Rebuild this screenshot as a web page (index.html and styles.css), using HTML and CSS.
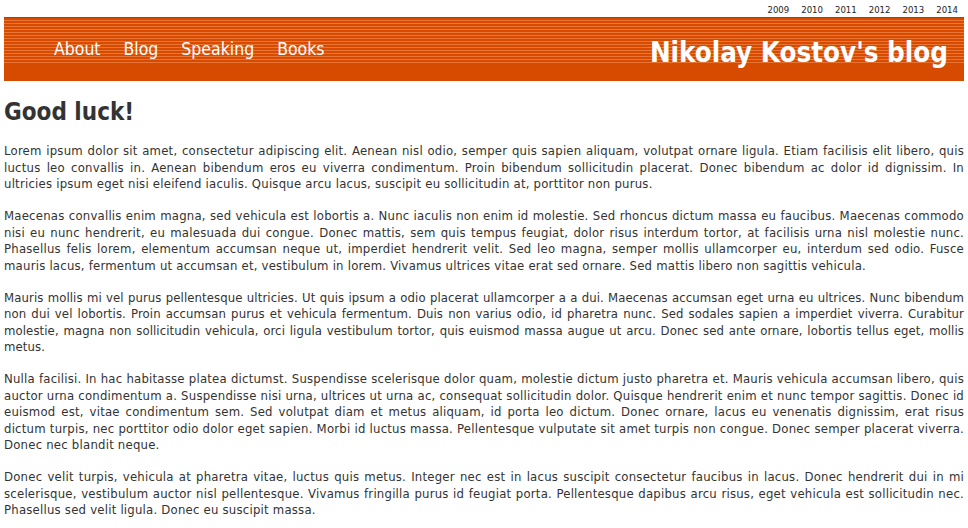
FILE: index.html
```html
<!DOCTYPE html>
<html>
<head>
<meta charset="utf-8">
<title>Nikolay Kostov's blog</title>
<link rel="stylesheet" href="styles.css">
</head>
<body>
<div class="page">
  <div class="years">
    <a href="#">2009</a><a href="#">2010</a><a href="#">2011</a><a href="#">2012</a><a href="#">2013</a><a href="#">2014</a>
  </div>
  <header class="header">
    <nav class="nav">
      <a href="#">About</a><a href="#">Blog</a><a href="#">Speaking</a><a href="#">Books</a>
    </nav>
    <div class="title">Nikolay Kostov's blog</div>
  </header>
  <main class="content">
    <h1>Good luck!</h1>
    <p>Lorem ipsum dolor sit amet, consectetur adipiscing elit. Aenean nisl odio, semper quis sapien aliquam, volutpat ornare ligula. Etiam facilisis elit libero, quis luctus leo convallis in. Aenean bibendum eros eu viverra condimentum. Proin bibendum sollicitudin placerat. Donec bibendum ac dolor id dignissim. In ultricies ipsum eget nisi eleifend iaculis. Quisque arcu lacus, suscipit eu sollicitudin at, porttitor non purus.</p>
    <p>Maecenas convallis enim magna, sed vehicula est lobortis a. Nunc iaculis non enim id molestie. Sed rhoncus dictum massa eu faucibus. Maecenas commodo nisi eu nunc hendrerit, eu malesuada dui congue. Donec mattis, sem quis tempus feugiat, dolor risus interdum tortor, at facilisis urna nisl molestie nunc. Phasellus felis lorem, elementum accumsan neque ut, imperdiet hendrerit velit. Sed leo magna, semper mollis ullamcorper eu, interdum sed odio. Fusce mauris lacus, fermentum ut accumsan et, vestibulum in lorem. Vivamus ultrices vitae erat sed ornare. Sed mattis libero non sagittis vehicula.</p>
    <p class="tight">Mauris mollis mi vel purus pellentesque ultricies. Ut quis ipsum a odio placerat ullamcorper a a dui. Maecenas accumsan eget urna eu ultrices. Nunc bibendum non dui vel lobortis. Proin accumsan purus et vehicula fermentum. Duis non varius odio, id pharetra nunc. Sed sodales sapien a imperdiet viverra. Curabitur molestie, magna non sollicitudin vehicula, orci ligula vestibulum tortor, quis euismod massa augue ut arcu. Donec sed ante ornare, lobortis tellus eget, mollis metus.</p>
    <p>Nulla facilisi. In hac habitasse platea dictumst. Suspendisse scelerisque dolor quam, molestie dictum justo pharetra et. Mauris vehicula accumsan libero, quis auctor urna condimentum a. Suspendisse nisi urna, ultrices ut urna ac, consequat sollicitudin dolor. Quisque hendrerit enim et nunc tempor sagittis. Donec id euismod est, vitae condimentum sem. Sed volutpat diam et metus aliquam, id porta leo dictum. Donec ornare, lacus eu venenatis dignissim, erat risus dictum turpis, nec porttitor odio dolor eget sapien. Morbi id luctus massa. Pellentesque vulputate sit amet turpis non congue. Donec semper placerat viverra. Donec nec blandit neque.</p>
    <p>Donec velit turpis, vehicula at pharetra vitae, luctus quis metus. Integer nec est in lacus suscipit consectetur faucibus in lacus. Donec hendrerit dui in mi scelerisque, vestibulum auctor nisl pellentesque. Vivamus fringilla purus id feugiat porta. Pellentesque dapibus arcu risus, eget vehicula est sollicitudin nec. Phasellus sed velit ligula. Donec eu suscipit massa.</p>
  </main>
</div>
</body>
</html>
```
FILE: styles.css
```css
html, body {
  margin: 0;
  padding: 0;
  background: #fff;
}
body {
  font-family: "DejaVu Sans Condensed", "DejaVu Sans", sans-serif;
  color: #333;
}
.page {
  width: 960px;
  margin: 0 auto;
}
.years {
  display: flex;
  justify-content: flex-end;
  gap: 12px;
  padding: 4px 6px 0 0;
  height: 13px;
  font-size: 9.5px;
  line-height: 12px;
}
.years a {
  color: #222;
  text-decoration: none;
}
.header {
  display: flex;
  justify-content: space-between;
  align-items: flex-start;
  height: 63px;
  border-top: 1px solid #b53d00;
  background-color: #d64b00;
  background-image: repeating-linear-gradient(to bottom, transparent 0, transparent 2px, rgba(255, 170, 120, 0.45) 2px, rgba(255, 170, 120, 0.45) 3px);
  background-size: 100% 45px;
  background-repeat: no-repeat;
}
.nav {
  display: flex;
  gap: 23px;
  padding: 20px 0 0 50px;
  font-size: 17.5px;
  line-height: 22px;
}
.nav a {
  color: #fff;
  text-decoration: none;
}
.title {
  color: #fff;
  font-weight: bold;
  font-size: 27.5px;
  line-height: 34px;
  padding: 17px 16px 0 0;
}
h1 {
  margin: 17px 0 17px;
  font-size: 24px;
  line-height: 28px;
  font-weight: bold;
  color: #333;
}
p {
  margin: 0 0 15.5px;
  font-size: 13px;
  line-height: 16.5px;
  letter-spacing: 0.22px;
  text-align: justify;
}
p.tight {
  letter-spacing: 0.1px;
}
```
